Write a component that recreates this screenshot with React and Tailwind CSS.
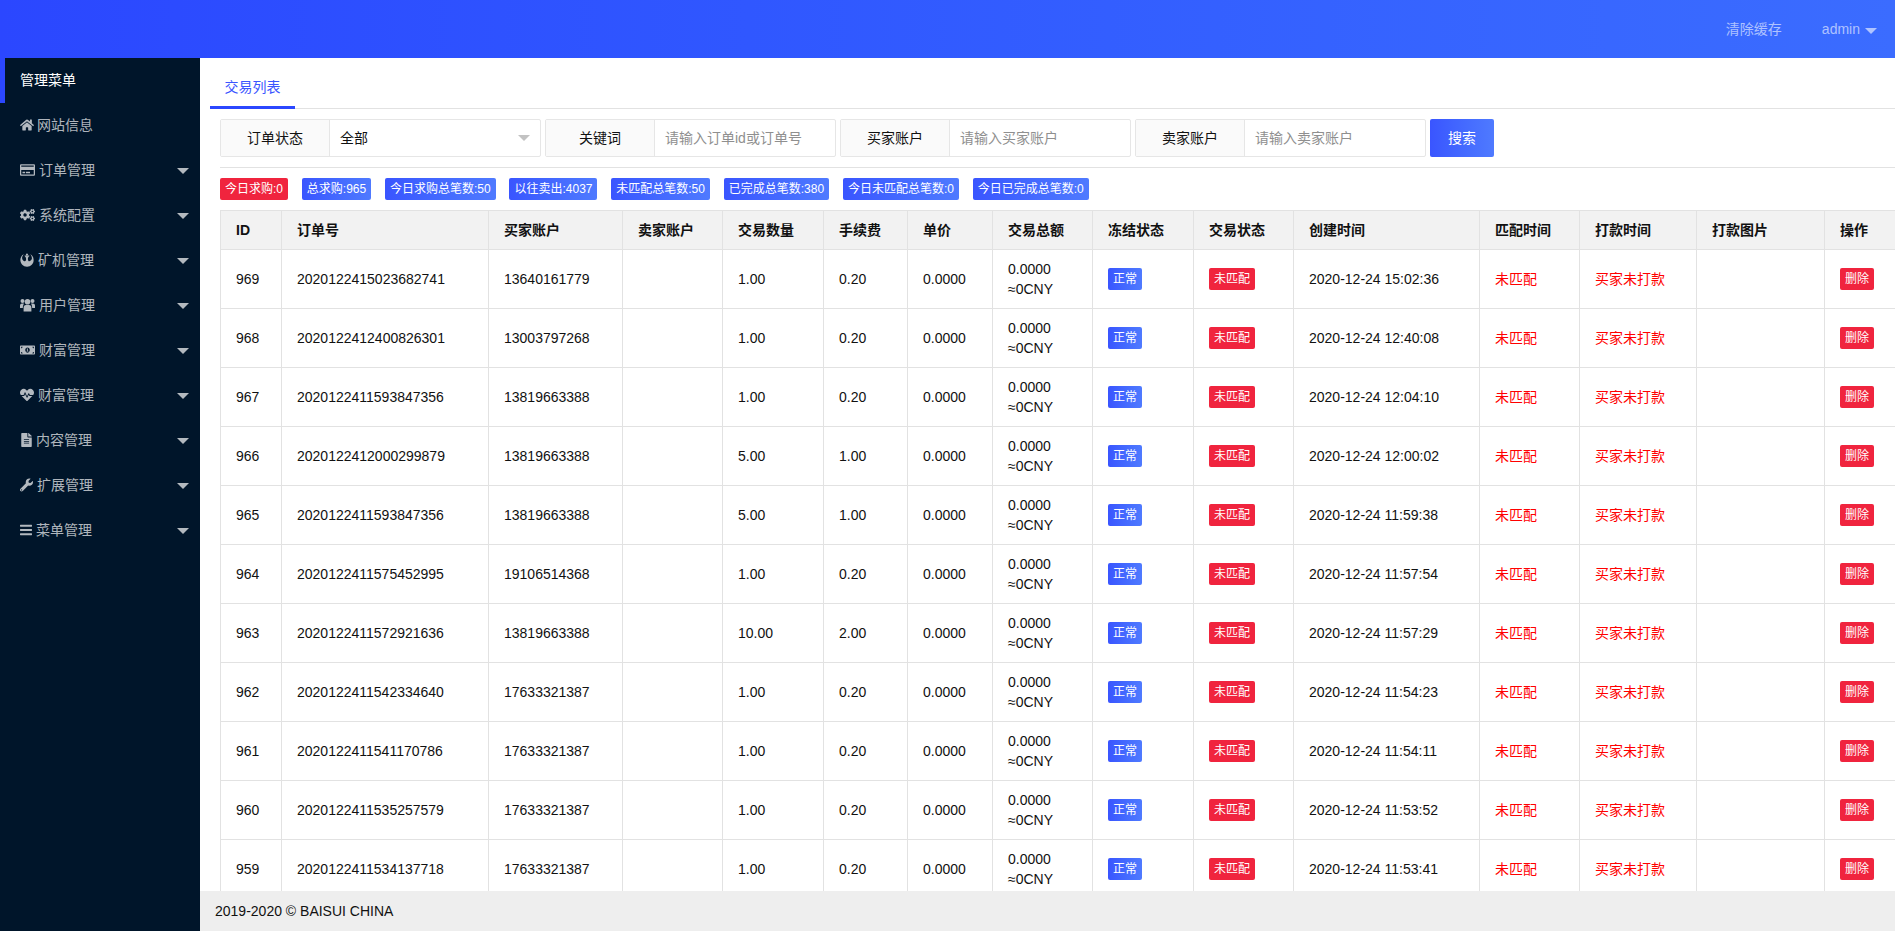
import React from "react";
import { FaHome, FaRegCreditCard, FaCogs, FaRebel, FaMoneyBillAlt, FaHeartbeat, FaFileAlt, FaWrench, FaBars } from "react-icons/fa";

// the older three-person glyph, the package only has the newer one
const UsersIcon = ({ className }) => (
  <svg viewBox="0 0 15 13" fill="currentColor" className={className}>
    <circle cx="7.5" cy="3.2" r="2.8" />
    <circle cx="2.5" cy="2.6" r="2" />
    <circle cx="12.5" cy="2.6" r="2" />
    <path d="M3.6 13V9.2Q3.6 6.6 6 6.6H9Q11.4 6.6 11.4 9.2V13Z" />
    <path d="M0 9.6V7Q0 5 2 5H4Q3.6 5.6 3.6 6 2.8 7 2.8 9.6Z" />
    <path d="M15 9.6V7Q15 5 13 5H11Q11.4 5.6 11.4 6 12.2 7 12.2 9.6Z" />
  </svg>
);

const menus = [
  { name: "网站信息", Icon: FaHome, w: "w-[14px]", box: "w-[17px]" },
  { name: "订单管理", Icon: FaRegCreditCard, w: "w-[15px]", arrow: true, box: "w-[19px]" },
  { name: "系统配置", Icon: FaCogs, w: "w-[15px]", arrow: true, box: "w-[19px]" },
  { name: "矿机管理", Icon: FaRebel, w: "w-[14px]", arrow: true, box: "w-[18px]" },
  { name: "用户管理", Icon: UsersIcon, w: "w-[15px]", arrow: true, box: "w-[19px]" },
  { name: "财富管理", Icon: FaMoneyBillAlt, w: "w-[15px]", arrow: true, box: "w-[19px]" },
  { name: "财富管理", Icon: FaHeartbeat, w: "w-[14px]", arrow: true, box: "w-[18px]" },
  { name: "内容管理", Icon: FaFileAlt, w: "w-[13px]", arrow: true, box: "w-[16px]" },
  { name: "扩展管理", Icon: FaWrench, w: "w-[13px]", arrow: true, box: "w-[17px]" },
  { name: "菜单管理", Icon: FaBars, w: "w-[12px]", arrow: true, box: "w-[16px]" },
];

const stats = ["今日求购:0", "总求购:965", "今日求购总笔数:50", "以往卖出:4037", "未匹配总笔数:50", "已完成总笔数:380", "今日未匹配总笔数:0", "今日已完成总笔数:0"];

const columns = [
  { title: "ID", w: "w-[61px]" },
  { title: "订单号", w: "w-[207px]" },
  { title: "买家账户", w: "w-[134px]" },
  { title: "卖家账户", w: "w-[100px]" },
  { title: "交易数量", w: "w-[101px]" },
  { title: "手续费", w: "w-[84px]" },
  { title: "单价", w: "w-[85px]" },
  { title: "交易总额", w: "w-[100px]" },
  { title: "冻结状态", w: "w-[101px]" },
  { title: "交易状态", w: "w-[100px]" },
  { title: "创建时间", w: "w-[186px]" },
  { title: "匹配时间", w: "w-[100px]" },
  { title: "打款时间", w: "w-[117px]" },
  { title: "打款图片", w: "w-[128px]" },
  { title: "操作", w: "w-[100px]" },
];

const rows = [
  [969, "2020122415023682741", "13640161779", "1.00", "0.20", "2020-12-24 15:02:36"],
  [968, "2020122412400826301", "13003797268", "1.00", "0.20", "2020-12-24 12:40:08"],
  [967, "2020122411593847356", "13819663388", "1.00", "0.20", "2020-12-24 12:04:10"],
  [966, "2020122412000299879", "13819663388", "5.00", "1.00", "2020-12-24 12:00:02"],
  [965, "2020122411593847356", "13819663388", "5.00", "1.00", "2020-12-24 11:59:38"],
  [964, "2020122411575452995", "19106514368", "1.00", "0.20", "2020-12-24 11:57:54"],
  [963, "2020122411572921636", "13819663388", "10.00", "2.00", "2020-12-24 11:57:29"],
  [962, "2020122411542334640", "17633321387", "1.00", "0.20", "2020-12-24 11:54:23"],
  [961, "2020122411541170786", "17633321387", "1.00", "0.20", "2020-12-24 11:54:11"],
  [960, "2020122411535257579", "17633321387", "1.00", "0.20", "2020-12-24 11:53:52"],
  [959, "2020122411534137718", "17633321387", "1.00", "0.20", "2020-12-24 11:53:41"],
];

const Caret = ({ className }) => (
  <span className={`w-0 h-0 border-x-[6px] border-x-transparent border-t-[6px] ${className}`} />
);

const Badge = ({ red, children }) => (
  <span
    className={`inline-block h-[22px] px-[5px] rounded-[2px] text-xs leading-[22px] text-white whitespace-nowrap ${
      red ? "bg-[#f0243e]" : "bg-gradient-to-r from-[#3a55ff] to-[#4f7aff]"
    }`}
  >
    {children}
  </span>
);

const Field = ({ label, placeholder, inputW }) => (
  <div className="flex h-[38px] border border-[#e6e6e6] rounded-[2px]">
    <div className="w-[109px] flex items-center justify-center bg-[#fafafa] border-r border-[#e6e6e6]">{label}</div>
    <div className={`${inputW} flex items-center pl-[10px] text-[#8f8f8f]`}>{placeholder}</div>
  </div>
);

const App = () => {
  return (
    <div className="h-screen flex flex-col overflow-hidden text-sm text-[#111] bg-white font-['Liberation_Sans','Noto_Sans_CJK_SC',sans-serif]">
      {/* Top bar */}
      <header className="h-[58px] shrink-0 flex items-center justify-end bg-gradient-to-r from-[#2b47ff] to-[#3b6cff] text-white/60">
        <span className="mr-10">清除缓存</span>
        <span className="mr-[5px]">admin</span>
        <Caret className="border-t-white/60 mr-[18px] mt-[3px]" />
      </header>

      <div className="flex flex-1 min-h-0">
        {/* Side menu */}
        <aside className="w-[200px] shrink-0 bg-[#00152a] text-white/70">
          <div className="h-[45px] flex items-center pb-[2px] pl-[15px] border-l-[5px] border-[#2b47ff] text-white">管理菜单</div>
          {menus.map(({ name, Icon, w, box, arrow }, i) => (
            <div key={i} className="h-[45px] flex items-center pl-[20px] pr-[11px]">
              <span className={`${box} shrink-0 -mt-[2px]`}>
                <Icon className={`${w} h-[14px]`} />
              </span>
              <span className="flex-1 -mt-[2px]">{name}</span>
              {arrow && <Caret className="border-t-white/70" />}
            </div>
          ))}
        </aside>

        <div className="flex-1 min-w-0 flex flex-col">
          <main className="flex-1 min-h-0 overflow-hidden">
            {/* Tabs */}
            <div className="ml-[10px] h-[51px] pt-[10px] border-b border-[#e2e2e2]">
              <div className="w-[85px] h-[41px] border-b-[3px] border-[#2b47ff] flex items-center justify-center text-[#3b55ff]">交易列表</div>
            </div>

            <div className="pl-[20px]">
              {/* Search */}
              <div className="flex h-[59px] pt-[10px] gap-[4px] border-b border-[#e2e2e2]">
                <div className="flex h-[38px] border border-[#e6e6e6] rounded-[2px]">
                  <div className="w-[109px] flex items-center justify-center bg-[#fafafa] border-r border-[#e6e6e6]">订单状态</div>
                  <div className="w-[210px] flex items-center justify-between pl-[10px] pr-[10px]">
                    <span>全部</span>
                    <Caret className="border-t-[#c2c2c2]" />
                  </div>
                </div>
                <Field label="关键词" placeholder="请输入订单id或订单号" inputW="w-[180px]" />
                <Field label="买家账户" placeholder="请输入买家账户" inputW="w-[180px]" />
                <Field label="卖家账户" placeholder="请输入卖家账户" inputW="w-[180px]" />
                <button className="w-[64px] h-[38px] rounded-[2px] text-white bg-gradient-to-r from-[#3a55ff] to-[#4f7aff]">搜索</button>
              </div>

              {/* Totals */}
              <div className="flex gap-[13.8px] mt-[10px] mb-[10px]">
                {stats.map((s, i) => (
                  <Badge key={s} red={i === 0}>{s}</Badge>
                ))}
              </div>

              {/* Orders */}
              <table className="table-fixed border-collapse w-[1704px]">
                <colgroup>
                  {columns.map((c) => (
                    <col key={c.title} className={c.w} />
                  ))}
                </colgroup>
                <thead>
                  <tr className="h-[39px] bg-[#f2f2f2]">
                    {columns.map((c) => (
                      <th key={c.title} className="px-[15px] border border-[#e2e2e2] text-left font-bold">{c.title}</th>
                    ))}
                  </tr>
                </thead>
                <tbody>
                  {rows.map(([id, no, buyer, qty, fee, time]) => (
                    <tr key={id} className="h-[59px] [&>td]:px-[15px] [&>td]:border [&>td]:border-[#e2e2e2]">
                      <td>{id}</td>
                      <td>{no}</td>
                      <td>{buyer}</td>
                      <td></td>
                      <td>{qty}</td>
                      <td>{fee}</td>
                      <td>0.0000</td>
                      <td className="leading-5">0.0000<br />≈0CNY</td>
                      <td><Badge>正常</Badge></td>
                      <td><Badge red>未匹配</Badge></td>
                      <td>{time}</td>
                      <td className="text-[#ff0000]">未匹配</td>
                      <td className="text-[#ff0000]">买家未打款</td>
                      <td></td>
                      <td><Badge red>删除</Badge></td>
                    </tr>
                  ))}
                </tbody>
              </table>
            </div>
          </main>

          <footer className="h-10 shrink-0 flex items-center pl-[15px] bg-[#eeeeee]">2019-2020 © BAISUI CHINA</footer>
        </div>
      </div>
    </div>
  );
};

export default App;
